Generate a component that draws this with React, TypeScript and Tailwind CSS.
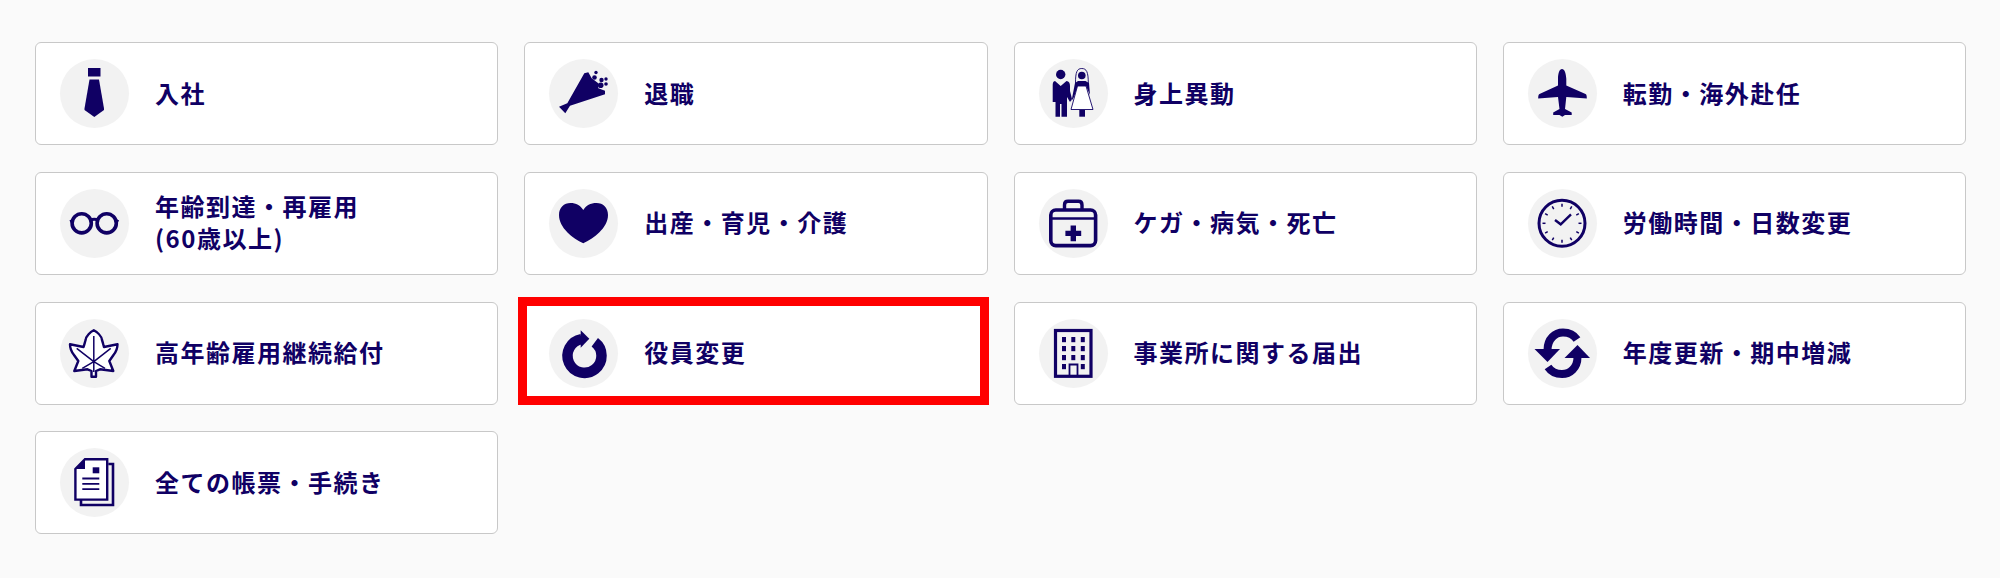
import React from 'react';

const NAVY = '#100064';

function IconBase({ children }: { children: React.ReactNode }) {
  return (
    <svg viewBox="0 0 69 69" className="w-[69px] h-[69px]" fill={NAVY}>
      {children}
    </svg>
  );
}

const TieIcon = () => (
  <IconBase>
    <rect x="28" y="9" width="12.5" height="8.5" />
    <path d="M29.5 20.5H39L44 49.5V51L34.3 58 24.5 51V49.5Z" />
  </IconBase>
);

const BouquetIcon = () => (
  <IconBase>
    <path d="M10 47.7L18.3 44.3 35.3 14.3 39.3 13.3 42.7 19.3 49.3 24.3 49.3 29.3 56 31.7 56 35.3 21 46.7 16.3 54.3Z" />
    <circle cx="47" cy="13.5" r="1.7" />
    <circle cx="45.5" cy="18.5" r="2.3" />
    <circle cx="52.5" cy="21" r="2.2" />
    <circle cx="57" cy="20" r="1.7" />
    <circle cx="51.7" cy="26.3" r="2.8" />
    <circle cx="57" cy="25" r="1.8" />
  </IconBase>
);

const CoupleIcon = () => (
  <IconBase>
    <circle cx="21.7" cy="15.5" r="4.7" />
    <path d="M16 22L21.7 27 27.5 22C30 22.5 31 24 31 27V32L33 40 31 43 28 38V57.7H22.5V45H21V57.7H16.5V43H13.7V27C13.7 24 14 22.5 16 22Z" />
    <path d="M36.5 24C36.5 13 38 9.5 42.8 9.5 47.5 9.5 49.3 13 49.3 24" fill="none" stroke={NAVY} strokeWidth="0.9" />
    <circle cx="42.8" cy="16.5" r="3.8" />
    <path d="M36 24L39 22 46.5 22 50 24 51 36 47 27 39 27 35 38 32.5 42Z" />
    <path d="M38.5 27H47L54 50.5H32Z" fill="#fff" stroke={NAVY} strokeWidth="0.9" />
    <rect x="40.3" y="51" width="5.7" height="6.7" />
  </IconBase>
);

const PlaneIcon = () => (
  <IconBase>
    <path d="M34 10C36.5 10 38 14 38.3 20V26.5L57.5 35C58.6 35.6 58.8 37 58.8 39.5L38.3 38 37 50 43.7 53.5V56H37L34.3 57.8 31.5 56H25.2V53.5L31.5 50 30 38 10.2 39.5C10.2 37 10.5 35.6 11.5 35L30 26.5V20C30 14 31.5 10 34 10Z" />
  </IconBase>
);

const GlassesIcon = () => (
  <IconBase>
    <circle cx="21.7" cy="34.3" r="9.6" fill="none" stroke={NAVY} strokeWidth="3.6" />
    <circle cx="46.7" cy="34.3" r="9.6" fill="none" stroke={NAVY} strokeWidth="3.6" />
    <path d="M30 31.5C32.5 30 36 30 38.5 31.5M12.5 31.5L10 32.5M56 31.5L58.5 32.5" fill="none" stroke={NAVY} strokeWidth="2.8" />
  </IconBase>
);

const HeartIcon = () => (
  <IconBase>
    <path d="M34.3 54.3C24 49.5 10 39 10 26 10 18.5 15 14 21.5 14 27 14 31.5 16.5 34.3 21 37 16.5 41.5 14 47.5 14 54 14 59 18.5 59 26 59 39 44.5 49.5 34.3 54.3Z" />
  </IconBase>
);

const MedicalIcon = () => (
  <IconBase>
    <rect x="11.8" y="21" width="44.8" height="35.6" rx="5" fill="none" stroke={NAVY} strokeWidth="3.6" />
    <path d="M25.5 20V16C25.5 13.5 27 12.3 29 12.3H39.5C41.5 12.3 43 13.5 43 16V20" fill="none" stroke={NAVY} strokeWidth="3.4" />
    <path d="M11.6 29.5H56.8" fill="none" stroke={NAVY} strokeWidth="2.6" />
    <path d="M31.6 36.5H37V41.7H42.2V47.1H37V52.3H31.6V47.1H26.4V41.7H31.6Z" />
  </IconBase>
);

const ClockIcon = () => {
  const ticks = Array.from({ length: 12 }, (_, i) => (i * Math.PI) / 6);
  return (
    <IconBase>
      <circle cx="34" cy="34.3" r="23" fill="none" stroke={NAVY} strokeWidth="3" />
      {ticks.map((a, i) => (
        <line
          key={i}
          x1={34 + Math.sin(a) * 16.5}
          y1={34.3 - Math.cos(a) * 16.5}
          x2={34 + Math.sin(a) * 19.5}
          y2={34.3 - Math.cos(a) * 19.5}
          stroke={NAVY}
          strokeWidth="1.5"
        />
      ))}
      <path d="M27 31L32.7 35.3 43 25.3" fill="none" stroke={NAVY} strokeWidth="2.4" />
    </IconBase>
  );
};

const MapleIcon = () => (
  <IconBase>
    <path
      d="M33.8 11.3C37 13 41.5 17 42 21 43 24 43.3 26 44 28L57.5 25.3C57.5 29 56 33 53.5 36L49.3 42 53.3 52 40 50.3 36 52V57.7H31.5V52L27.5 50.3 14.3 52 18.3 42 14 36C11.5 33 10 29 10 25.3L23.5 28C24.3 26 24.7 24 25.6 21 26 17 30.5 13 33.8 11.3Z"
      fill="#fff"
      stroke={NAVY}
      strokeWidth="2.4"
      strokeLinejoin="round"
    />
    <path d="M33.8 17V53M33.8 42.7L50.7 29.3M33.8 42.7L16.7 29.3M33.8 42.7L45 49.3M33.8 42.7L22.3 49.3" fill="none" stroke={NAVY} strokeWidth="1.5" />
  </IconBase>
);

const RotateIcon = () => (
  <IconBase>
    <path d="M45.8 23.3A17 17 0 1 1 32.5 20.1" fill="none" stroke={NAVY} strokeWidth="10.5" />
    <path d="M31.7 11.3L40.3 19.7 31.7 28.7Z" />
  </IconBase>
);

const BuildingIcon = () => {
  const rows = [18, 27, 36, 45];
  const cols = [23, 32.3, 41.8];
  return (
    <IconBase>
      <rect x="16.5" y="11.5" width="35.5" height="45.8" fill="none" stroke={NAVY} strokeWidth="3.2" />
      {rows.map((y) =>
        cols.map((x) =>
          y === 45 && x === 32.3 ? null : <rect key={`${x}-${y}`} x={x} y={y} width="4" height="5.2" />,
        ),
      )}
      <path d="M30.5 58V45.5H38.5V58" fill="none" stroke={NAVY} strokeWidth="1.8" />
    </IconBase>
  );
};

const SyncIcon = () => (
  <IconBase>
    <path d="M19.5 31C19.5 20 27 13.5 35 13.5 41 13.5 46 16 49 20.5" fill="none" stroke={NAVY} strokeWidth="8" />
    <path d="M49.5 38C49.5 49 42 55 34 55 28 55 23 52.5 20 48" fill="none" stroke={NAVY} strokeWidth="8" />
    <path d="M6.5 30H32L19.5 43Z" />
    <path d="M36.5 39H62L49.5 26Z" />
  </IconBase>
);

const DocsIcon = () => (
  <IconBase>
    <path d="M48.3 16H53V57H21V52" fill="none" stroke={NAVY} strokeWidth="2.6" />
    <path d="M25 11.2H47.2V51.6H15.4V21Z" fill="#fff" stroke={NAVY} strokeWidth="2.4" />
    <path d="M25 11L15 21H25Z" />
    <rect x="32.7" y="19.3" width="6.6" height="6" />
    <path d="M22.3 30.5H39.3M22.3 35.8H39.3M22.3 41.2H39.3" fill="none" stroke={NAVY} strokeWidth="1.8" />
  </IconBase>
);

const items = [
  { label: ['入社'], icon: <TieIcon /> },
  { label: ['退職'], icon: <BouquetIcon /> },
  { label: ['身上異動'], icon: <CoupleIcon /> },
  { label: ['転勤・海外赴任'], icon: <PlaneIcon /> },
  { label: ['年齢到達・再雇用', '(60歳以上)'], icon: <GlassesIcon /> },
  { label: ['出産・育児・介護'], icon: <HeartIcon /> },
  { label: ['ケガ・病気・死亡'], icon: <MedicalIcon /> },
  { label: ['労働時間・日数変更'], icon: <ClockIcon /> },
  { label: ['高年齢雇用継続給付'], icon: <MapleIcon /> },
  { label: ['役員変更'], icon: <RotateIcon />, marked: true },
  { label: ['事業所に関する届出'], icon: <BuildingIcon /> },
  { label: ['年度更新・期中増減'], icon: <SyncIcon /> },
  { label: ['全ての帳票・手続き'], icon: <DocsIcon /> },
];

export default function App() {
  return (
    <div className="min-h-[578px] bg-[#fafafa] font-['Noto_Sans_CJK_JP','Liberation_Sans',sans-serif]">
      <div className="grid grid-cols-4 gap-x-[26px] gap-y-[26.75px] pl-[35px] pr-[34px] pt-[42px]">
        {items.map((item) => (
          <div
            key={item.label[0]}
            className="relative flex h-[103px] items-center gap-[26px] rounded-[6px] border border-[#c8c8c8] bg-white pl-[24px]"
          >
            {/* icon circle */}
            <div className="h-[69px] w-[69px] shrink-0 rounded-full bg-[#f2f2f2]">{item.icon}</div>
            <div className="pb-[2px] text-[24px] font-bold leading-[32px] tracking-[1.5px] text-[#100064]">
              {item.label.map((line) => (
                <div key={line}>{line}</div>
              ))}
            </div>
            {item.marked && (
              <div className="absolute left-[-7px] top-[-5.5px] h-[108px] w-[471px] border-[9px] border-[#ff0000]" />
            )}
          </div>
        ))}
      </div>
    </div>
  );
}
